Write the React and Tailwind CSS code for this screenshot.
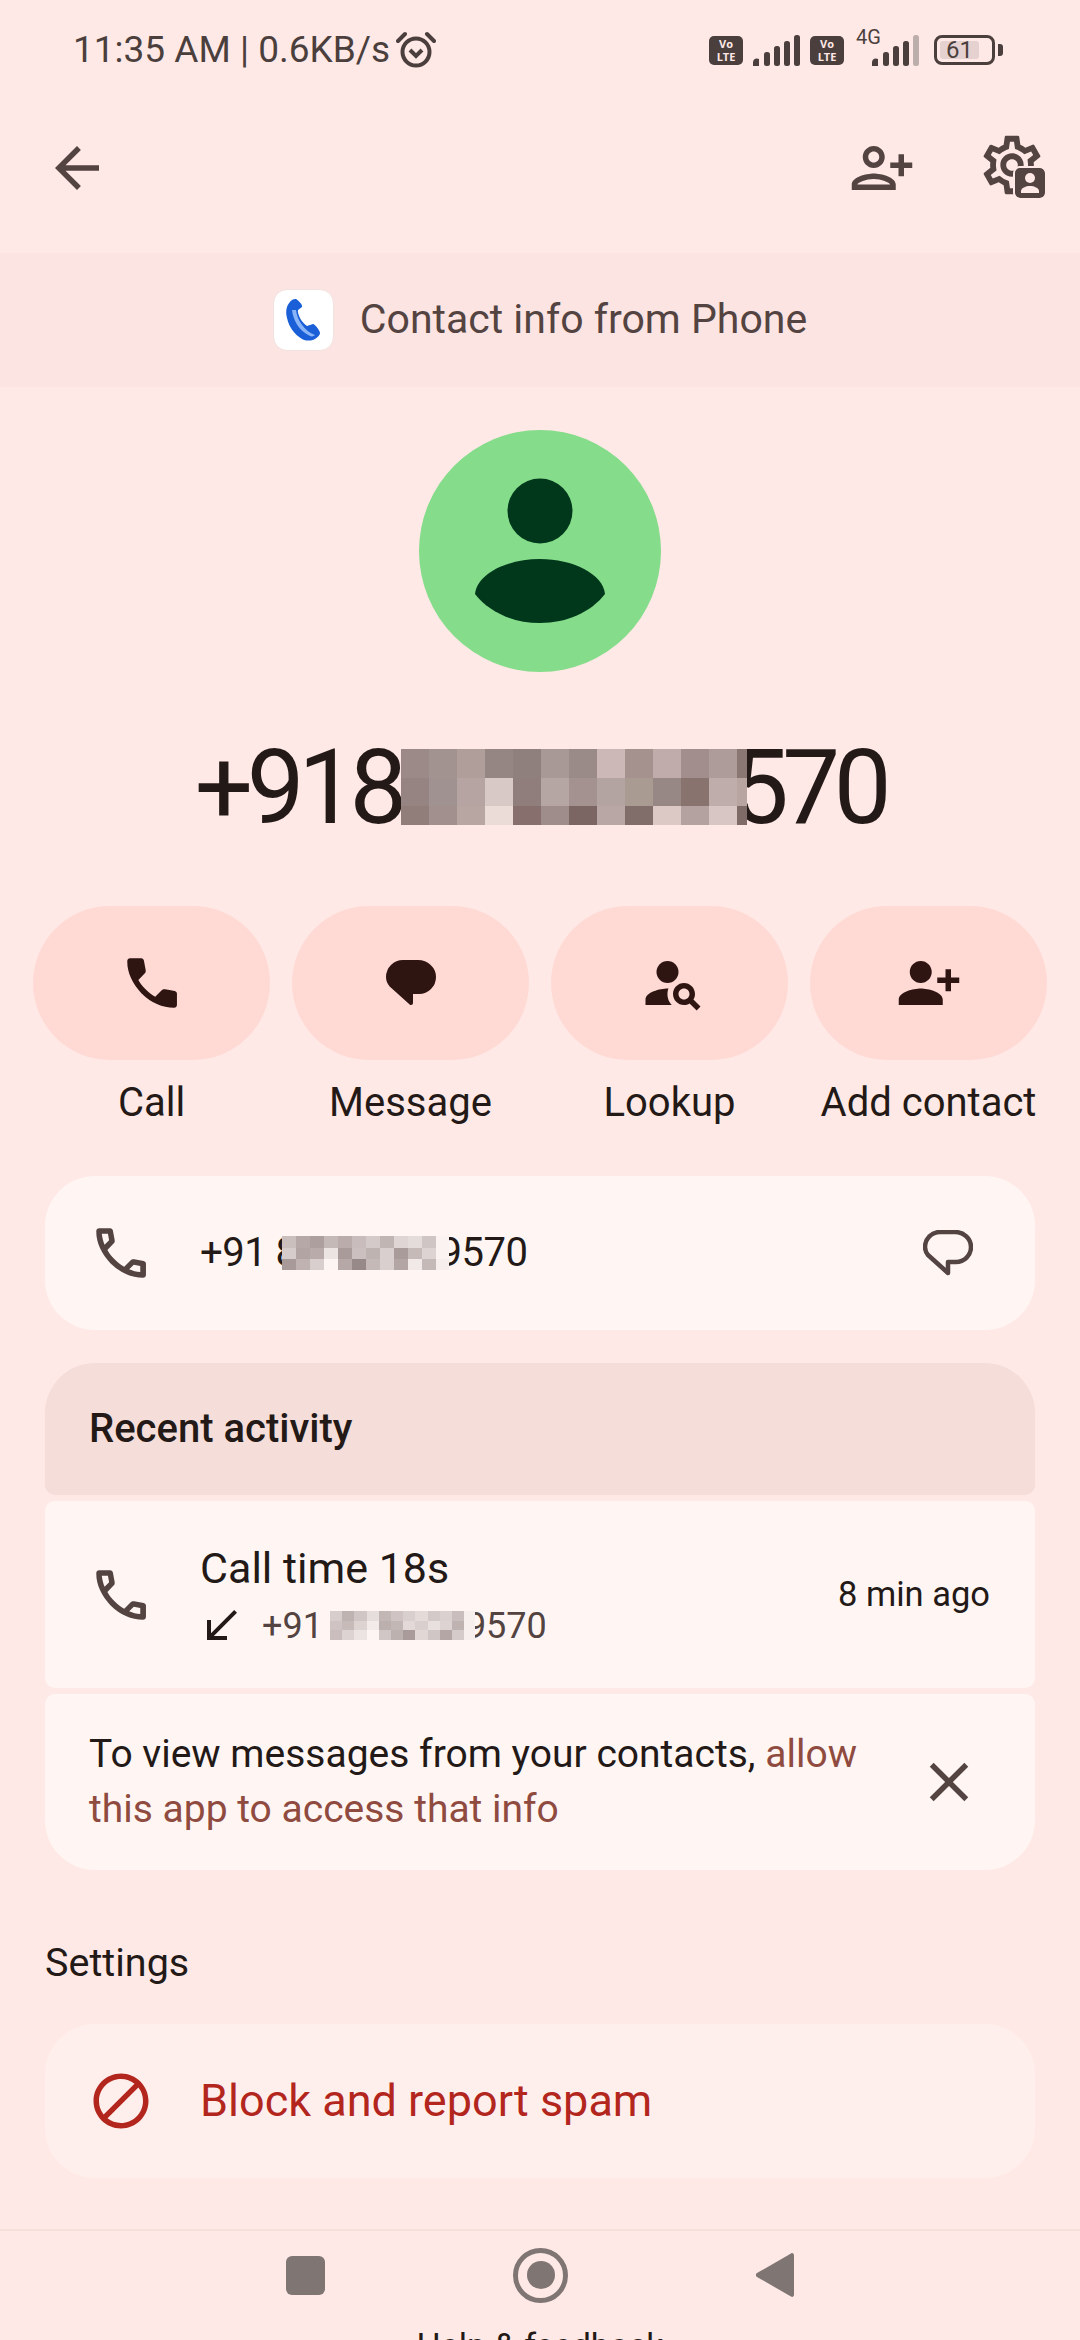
import React from "react";
import {
  MdArrowBack,
  MdOutlinePersonAdd,
  MdOutlineSettings,
  MdPersonSearch,
  MdPersonAdd,
  MdClose,
  MdBlock,
  MdCallReceived,
} from "react-icons/md";

const bigMosaic = [
  "#9b8a87", "#a39390", "#b09e9b", "#958583", "#8f7f7d", "#a89896", "#9a8a88", "#ccb8b6", "#a5928f", "#c0acaa", "#a28f8d", "#ad9c99", "#8a7774",
  "#958481", "#a09290", "#b5a4a2", "#d9c9c6", "#8f7e7c", "#b5a5a3", "#a39290", "#b3a3a1", "#a99b92", "#978785", "#88736f", "#bfadab", "#b8a5a2",
  "#917e7b", "#a1908d", "#b8a6a3", "#ecdcd8", "#866f6c", "#9e8d8a", "#7c6664", "#b9a7a5", "#816e6b", "#dcc8c4", "#b4a2a0", "#d7c6c3", "#7e6a67",
];

const phoneMosaic = [
  "#cbbfbe", "#b5a8a7", "#ad9f9e", "#c5b9b8", "#b9acab", "#c8bdbc", "#d4cac9", "#c1b5b4", "#ded5d4", "#e4dcdb", "#cfc5c4", "#fbf3f1",
  "#d6cccb", "#b1a4a3", "#b8abaa", "#ece4e2", "#a99b9a", "#cbc0bf", "#bfb3b2", "#d9cfce", "#a89b9a", "#c6bab9", "#ddd3d2", "#fbf3f1",
  "#a89a99", "#bfb2b1", "#d8cecd", "#fdf5f3", "#b5a8a7", "#978988", "#c5b9b8", "#d9cfce", "#b2a5a4", "#f1e9e7", "#c5b9b8", "#f6eeec",
];

const activityMosaic = [
  "#d7cdcc", "#bfb3b2", "#d0c6c5", "#e6dedc", "#c3b7b6", "#cfc4c3", "#d9cfce", "#e4dbd9", "#d3c9c8", "#d9d0cf", "#c9bebd", "#f7efed",
  "#cfc4c3", "#c7bbba", "#ddd4d2", "#f3ebe9", "#bcb0af", "#c3b7b6", "#e2d9d8", "#d9cfce", "#e8e0de", "#dcd3d2", "#bfb3b2", "#f7efed",
  "#c9bebd", "#dcd3d2", "#ece4e2", "#fdf5f3", "#d0c6c5", "#bdb1b0", "#a89b9a", "#e1d8d6", "#d0c6c5", "#b3a6a5", "#d5cbca", "#f7efed",
];

function Mosaic({ colors, cols, cellW, cellH, rowHeights, width, height, className }) {
  const rows = rowHeights || [];
  let y = 0;
  const rects = [];
  for (let r = 0; r < colors.length / cols; r++) {
    const h = rows[r] || cellH;
    for (let c = 0; c < cols; c++) {
      rects.push(<rect key={r + "-" + c} x={c * cellW} y={y} width={cellW + 0.5} height={h + 0.5} fill={colors[r * cols + c]} />);
    }
    y += h;
  }
  return (
    <svg width={width} height={height} viewBox={`0 0 ${width} ${height}`} shapeRendering="crispEdges" className={className}>
      {rects}
    </svg>
  );
}

const handset =
  "M19.95 21q-3.125 0-6.175-1.362-3.05-1.363-5.55-3.863-2.5-2.5-3.862-5.55Q3 7.175 3 4.05q0-.45.3-.75t.75-.3H8.1q.35 0 .625.238.275.237.325.562l.65 3.5q.05.4-.025.675-.075.275-.275.475L7.05 10.9q.5.925 1.187 1.787.688.863 1.513 1.663.775.775 1.625 1.438.85.662 1.8 1.212l2.35-2.35q.225-.225.588-.338.362-.112.712-.062l3.45.7q.35.1.575.362.225.263.225.588v4.05q0 .45-.3.75t-.75.3Z";
const handsetCut =
  "M6.025 9l1.65-1.65L7.25 5H5.025q.125 1.025.35 2.025.225 1 .65 1.975Zm8.95 8.95q.975.425 1.988.675 1.012.25 2.037.325v-2.2l-2.35-.475-1.675 1.675Z";

function CallIcon({ outline, className }) {
  return (
    <svg viewBox="0 0 24 24" fill="currentColor" fillRule="evenodd" className={className}>
      <path d={outline ? handset + handsetCut : handset} />
    </svg>
  );
}

function Signal({ lastColor = "#4b3f3d" }) {
  return (
    <svg width="47" height="31" viewBox="0 0 47 31" fill="#4b3f3d">
      <path d="M0 31v-4a4 4 0 0 1 6-3v7z" />
      <rect x="11" y="17" width="6" height="14" rx="2.5" />
      <rect x="21" y="11" width="6" height="20" rx="2.5" />
      <rect x="31" y="6" width="6" height="25" rx="2.5" />
      <rect x="41" y="0" width="6" height="31" rx="2.5" fill={lastColor} />
    </svg>
  );
}

function Volte() {
  return (
    <div className="w-[34px] h-[29px] rounded-[5px] bg-[#4b3f3d] flex flex-col items-center justify-center text-[#ffe9e6] font-bold text-[11px] leading-[13px] font-['Open_Sans',sans-serif]">
      <span>Vo</span>
      <span>LTE</span>
    </div>
  );
}

function Alarm() {
  return (
    <svg width="40" height="38" viewBox="0 0 40 38" fill="none" stroke="#4b3f3d">
      <circle cx="20" cy="21" r="13.5" strokeWidth="4" />
      <path d="M14 19l6 6 6-6" strokeWidth="4" />
      <path d="M2 10 9 3M38 10 31 3" strokeWidth="4" strokeLinecap="round" />
    </svg>
  );
}

function Bubble({ outline, className }) {
  const d = "M17 2H32A16 15 0 0 1 48 17A15 15 0 0 1 33 32H25V43L5 25A13 13 0 0 1 2 17A15 15 0 0 1 17 2Z";
  return (
    <svg viewBox="0 0 50 47" className={className}>
      {outline ? (
        <path d={d} fill="none" stroke="#534341" strokeWidth="4.5" strokeLinejoin="round" />
      ) : (
        <path d={d} fill="#2f1512" stroke="#2f1512" strokeWidth="4" strokeLinejoin="round" />
      )}
    </svg>
  );
}

function SettingsContact() {
  return (
    <div className="relative w-[60px] h-[60px]">
      <MdOutlineSettings className="absolute left-[-8px] top-[-8px] w-[70px] h-[70px] text-[#534341]" />
      <div className="absolute right-0 bottom-0 w-[30px] h-[30px] rounded-[5px] bg-[#534341] outline-2 outline-[#ffe9e6] flex items-center justify-center">
        <svg width="22" height="24" viewBox="0 0 22 24" fill="#ffe9e6">
          <circle cx="11" cy="7" r="5" />
          <path d="M2 22v-2c0-3 5-5 9-5s9 2 9 5v2z" />
        </svg>
      </div>
    </div>
  );
}

function PhoneLogo() {
  return (
    <div className="w-[61px] h-[62px] rounded-[14px] bg-white border border-[#f2e2df] flex items-center justify-center">
      <svg width="36" height="42" viewBox="0 0 36 42">
        <path d="M7 1C2 5 0 11 2 19c2 9 7 16 15 21 4 2 9 2 13 0 3-2 5-4 5-6 0-2-5-9-7-9l-6 2C17 24 12 15 13 11l4-3c1-2-3-6-6-8-1 0-3 0-4 1z" fill="#1a5fd8" />
        <path d="M7 11c1 10 7 21 18 26 2 1 4 0 5-1-9-3-18-14-19-25z" fill="#8ab4f8" />
      </svg>
    </div>
  );
}

const actions = [
  { label: "Call", icon: <CallIcon className="w-[66px] h-[66px]" /> },
  { label: "Message", icon: <Bubble className="w-[50px] h-[47px]" /> },
  { label: "Lookup", icon: <MdPersonSearch className="w-[66px] h-[66px] ml-[6px]" /> },
  { label: "Add contact", icon: <MdPersonAdd className="w-[66px] h-[66px] -scale-x-100" /> },
];

export default function App() {
  return (
    <div className="relative w-[1080px] h-[2340px] overflow-hidden bg-[#ffe9e6] text-[#231917] font-['Roboto',sans-serif]">
      {/* status bar */}
      <div className="h-[96px] pt-[4px] pl-[73px] pr-[85px] flex items-center justify-between text-[#4b3f3d]">
        <div className="flex items-center gap-[6px] text-[37px]">
          <span>11:35 AM | 0.6KB/s</span>
          <Alarm />
        </div>
        <div className="flex items-center">
          <Volte />
          <div className="ml-[10px]"><Signal /></div>
          <div className="ml-[10px]"><Volte /></div>
          <div className="relative ml-[28px]">
            <Signal lastColor="#bbaeab" />
            <span className="absolute left-[-16px] top-[-8px] text-[20px] leading-[20px]">4G</span>
          </div>
          <div className="ml-[15px] w-[61px] h-[30px] rounded-[8px] border-[3px] border-[#4b3f3d] p-[3px] relative">
            <div className="w-[39px] h-full bg-[#e5d2d0] rounded-[3px] flex items-center justify-center text-[24px] leading-none">61</div>
            <div className="absolute right-[-11px] top-[6px] w-[5px] h-[12px] rounded-r-[3px] bg-[#4b3f3d]" />
          </div>
        </div>
      </div>

      {/* toolbar */}
      <div className="h-[157px] pl-[44px] pr-[35px] pb-[14px] flex items-center text-[#534341]">
        <MdArrowBack className="w-[66px] h-[66px]" />
        <div className="flex-1" />
        <MdOutlinePersonAdd className="w-[66px] h-[66px] -scale-x-100" />
        <div className="ml-[70px]"><SettingsContact /></div>
      </div>

      {/* source banner */}
      <div className="h-[134px] bg-[#fce4e2] flex items-center justify-center gap-[26px]">
        <PhoneLogo />
        <span className="text-[41px] text-[#534341]">Contact info from Phone</span>
      </div>

      {/* avatar */}
      <div className="mt-[43px] flex justify-center">
        <div className="w-[242px] h-[242px] rounded-full bg-[#85dc8a] flex items-center justify-center">
          <svg width="130" height="146" viewBox="0 0 130 146" fill="#01381c">
            <circle cx="65" cy="33" r="32.5" />
            <path d="M0 116C2 96 32 81 65 81s63 15 65 35c-14 18-38 29-65 29S14 134 0 116z" />
          </svg>
        </div>
      </div>

      {/* number */}
      <div className="mt-[50px] h-[130px] flex items-center justify-center text-[103px] leading-none tracking-[-6.5px] text-[#231917]">
        <span>+918</span>
        <Mosaic className="relative z-10 shrink-0" colors={bigMosaic} cols={13} cellW={28} rowHeights={[29, 28, 19]} width={346} height={76} />
        <span className="-ml-[16px]">570</span>
      </div>

      {/* actions */}
      <div className="mt-[54px] px-[33px] grid grid-cols-4 gap-x-[22px]">
        {actions.map((a) => (
          <div key={a.label} className="flex flex-col items-center">
            <div className="w-full h-[154px] rounded-full bg-[#ffdad5] flex items-center justify-center text-[#2f1512]">{a.icon}</div>
            <span className="mt-[21px] text-[40px] leading-[44px] whitespace-nowrap">{a.label}</span>
          </div>
        ))}
      </div>

      {/* phone row */}
      <div className="mt-[51px] mx-[45px] h-[154px] rounded-[50px] bg-[#fff6f4] flex items-center pl-[43px] pr-[62px]">
        <CallIcon outline className="w-[66px] h-[66px] shrink-0 text-[#534341]" />
        <div className="ml-[46px] flex items-center text-[40px] tracking-[-0.5px]">
          <span className="whitespace-pre">+91 8</span>
          <Mosaic className="relative z-10 -ml-[16px] shrink-0" colors={phoneMosaic} cols={12} cellW={14} cellH={11.5} width={167} height={34} />
          <span className="-ml-[9px]">9570</span>
        </div>
        <div className="flex-1" />
        <Bubble outline className="w-[50px] h-[47px]" />
      </div>

      {/* recent activity */}
      <div className="mt-[33px] mx-[45px] flex flex-col gap-[6px]">
        <div className="h-[132px] rounded-t-[50px] rounded-b-[10px] bg-[#f5ddd9] flex items-center pl-[44px] text-[40px] font-medium">Recent activity</div>
        <div className="h-[187px] rounded-[10px] bg-[#fff6f4] flex items-center pl-[43px] pr-[45px]">
          <CallIcon outline className="w-[66px] h-[66px] shrink-0 text-[#534341]" />
          <div className="ml-[46px] flex flex-col">
            <span className="text-[43px] leading-[56px]">Call time 18s</span>
            <div className="mt-[6px] flex items-center text-[36px] leading-[44px] text-[#534341]">
              <MdCallReceived className="w-[48px] h-[48px] text-[#231917] -ml-[3px]" />
              <span className="ml-[17px]">+91</span>
              <Mosaic className="relative z-10 ml-[7px] shrink-0" colors={activityMosaic} cols={12} cellW={12.2} cellH={9.7} width={145} height={29} />
              <span className="-ml-[9px]">9570</span>
            </div>
          </div>
          <div className="flex-1" />
          <span className="text-[34.5px]">8 min ago</span>
        </div>
        <div className="h-[176px] rounded-t-[10px] rounded-b-[50px] bg-[#fff6f4] flex items-center pl-[44px] pr-[53px]">
          <p className="w-[800px] text-[39px] leading-[55px]">
            To view messages from your contacts, <span className="text-[#904b40]">allow this app to access that info</span>
          </p>
          <div className="flex-1" />
          <MdClose className="w-[66px] h-[66px] text-[#534341] shrink-0" />
        </div>
      </div>

      {/* settings */}
      <div className="mt-[70px] mx-[45px] text-[39.5px] leading-[46px]">Settings</div>
      <div className="mt-[38px] mx-[45px] h-[154px] rounded-[50px] bg-[#ffefec] flex items-center pl-[43px] text-[#b3261e]">
        <MdBlock className="w-[66px] h-[66px] shrink-0" />
        <span className="ml-[46px] text-[45px]">Block and report spam</span>
      </div>

      {/* nav bar */}
      <div className="mt-[51px] border-t-2 border-[#f5e0dc] flex flex-col items-center">
        <div className="h-[88px] shrink-0 flex items-center gap-[188px]">
          <div className="w-[39px] h-[39px] rounded-[6px] bg-[#7f7674]" />
          <div className="w-[55px] h-[55px] rounded-full border-[5px] border-[#7f7674] flex items-center justify-center">
            <div className="w-[28px] h-[28px] rounded-full bg-[#7f7674]" />
          </div>
          <svg width="38" height="44" viewBox="0 0 38 44" fill="#7f7674">
            <path d="M35 0.5c1.5-1 3 0 3 2v39c0 2-1.5 3-3 2L1 24c-1.500-1-1.500-3 0-4z" />
          </svg>
        </div>
        <span className="mt-[6px] shrink-0 text-[34px] leading-[40px] text-[#231917]">Help &amp; feedback</span>
      </div>
    </div>
  );
}
